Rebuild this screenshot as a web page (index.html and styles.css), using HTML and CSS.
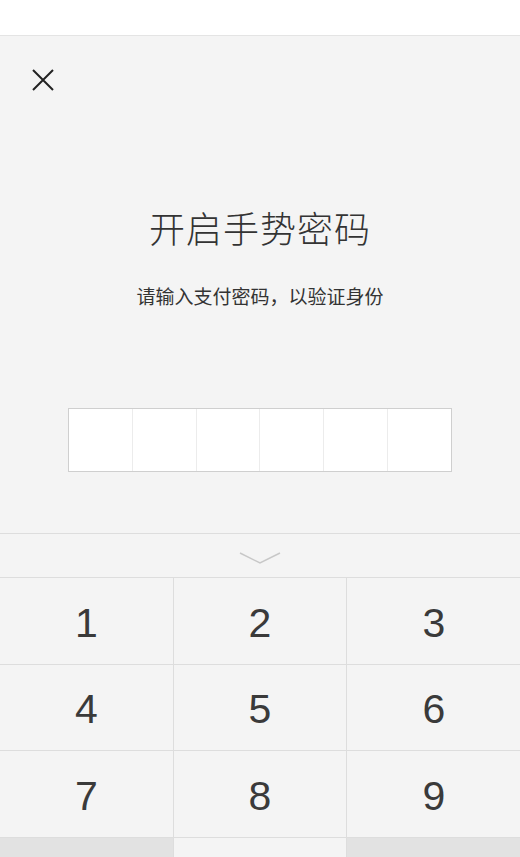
FILE: index.html
```html
<!DOCTYPE html>
<html lang="zh">
<head>
<meta charset="utf-8">
<title>开启手势密码</title>
<link rel="stylesheet" href="styles.css">
</head>
<body>
<div class="status"></div>
<div class="main">
  <div class="close">
    <svg width="22" height="22" viewBox="0 0 22 22"><path d="M1 1 L21 21 M21 1 L1 21" stroke="#222" stroke-width="2" fill="none"/></svg>
  </div>
  <h1 class="title">开启手势密码</h1>
  <p class="subtitle">请输入支付密码，以验证身份</p>
  <div class="code">
    <div class="cell"></div><div class="cell"></div><div class="cell"></div><div class="cell"></div><div class="cell"></div><div class="cell"></div>
  </div>
</div>
<div class="keyboard">
  <div class="kb-top">
    <svg width="42" height="12" viewBox="0 0 42 12"><path d="M1 1 L21 11 L41 1" stroke="#c8c8c8" stroke-width="1.5" fill="none"/></svg>
  </div>
  <div class="keys">
    <div class="key">1</div><div class="key">2</div><div class="key">3</div>
    <div class="key">4</div><div class="key">5</div><div class="key">6</div>
    <div class="key">7</div><div class="key">8</div><div class="key">9</div>
    <div class="key dark"></div><div class="key"></div><div class="key dark"></div>
  </div>
</div>
</body>
</html>
```
FILE: styles.css
```css
html, body {
  margin: 0;
  padding: 0;
  background: #f4f4f4;
  font-family: "Noto Sans CJK SC", "Noto Sans", sans-serif;
  height: 857px;
  overflow: hidden;
}
.status {
  height: 35px;
  background: #ffffff;
  border-bottom: 1px solid #e4e4e4;
}
.main {
  display: flex;
  flex-direction: column;
  align-items: center;
  height: 497px;
  background: #f4f4f4;
}
.close {
  align-self: flex-start;
  margin: 33px 0 0 32px;
  width: 22px;
  height: 22px;
}
.close svg { display: block; }
.title {
  margin: 114px 0 0;
  font-size: 36px;
  line-height: 44px;
  font-weight: 300;
  color: #333333;
  letter-spacing: 1px;
}
.subtitle {
  margin: 34px 0 0;
  font-size: 19px;
  line-height: 26px;
  color: #333333;
}
.code {
  margin-top: 99px;
  display: flex;
  width: 382px;
  height: 62px;
  border: 1px solid #cfcfcf;
  background: #ffffff;
}
.cell {
  flex: 1;
  border-right: 1px solid #ececec;
}
.cell:last-child { border-right: none; }
.keyboard {
  border-top: 1px solid #dddddd;
  background: #f4f4f4;
}
.kb-top {
  height: 43px;
  display: flex;
  align-items: center;
  justify-content: center;
  border-bottom: 1px solid #dddddd;
}
.kb-top svg { display: block; margin-top: 4px; }
.keys {
  display: grid;
  grid-template-columns: 173px 172px 174px;
  grid-auto-rows: 85.5px;
  gap: 1px;
  background: #dddddd;
}
.key {
  background: #f4f4f4;
  display: flex;
  align-items: center;
  justify-content: center;
  padding-top: 5px;
  box-sizing: border-box;
  font-family: "Liberation Sans", Arial, sans-serif;
  font-size: 41px;
  color: #3a3a3a;
}
.key.dark { background: #e2e2e2; }
```
